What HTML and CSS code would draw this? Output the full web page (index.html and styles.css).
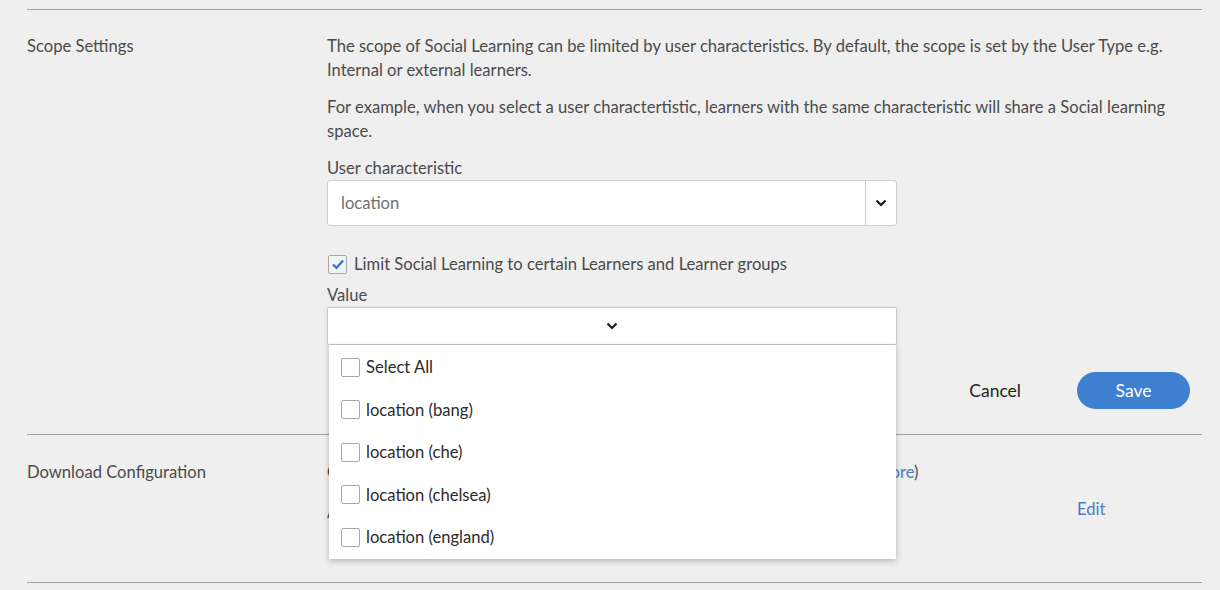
FILE: index.html
```html
<!DOCTYPE html>
<html>
<head>
<meta charset="utf-8">
<link rel="stylesheet" href="styles.css">
</head>
<body>
<div class="page">
  <section class="row first">
    <div class="label">Scope Settings</div>
    <div class="content">
      <p class="desc">The scope of Social Learning can be limited by user characteristics. By default, the scope is set by the User Type e.g. Internal or external learners.</p>
      <p class="desc">For example, when you select a user charactertistic, learners with the same characteristic will share a Social learning space.</p>
      <div class="field-label">User characteristic</div>
      <div class="select">
        <span class="select-value">location</span>
        <span class="select-btn">
          <svg width="12" height="8" viewBox="0 0 12 8"><path d="M1.5 1.5 L6 6 L10.5 1.5" fill="none" stroke="#1a1a1a" stroke-width="2.2"/></svg>
        </span>
      </div>
      <label class="check-row">
        <span class="box checked">
          <svg width="14" height="12" viewBox="0 0 14 12"><path d="M2 6.5 L5.5 10 L12 2.5" fill="none" stroke="#2f6fce" stroke-width="2.2"/></svg>
        </span>
        <span>Limit Social Learning to certain Learners and Learner groups</span>
      </label>
      <div class="field-label value-label">Value</div>
      <div class="multi">
        <div class="multi-head">
          <svg width="12" height="8" viewBox="0 0 12 8"><path d="M1.5 1.5 L6 6 L10.5 1.5" fill="none" stroke="#1a1a1a" stroke-width="2.2"/></svg>
        </div>
        <ul class="menu">
          <li><span class="box"></span>Select All</li>
          <li><span class="box"></span>location (bang)</li>
          <li><span class="box"></span>location (che)</li>
          <li><span class="box"></span>location (chelsea)</li>
          <li><span class="box"></span>location (england)</li>
        </ul>
      </div>
      <div class="actions">
        <button class="cancel">Cancel</button>
        <button class="save">Save</button>
      </div>
    </div>
  </section>
  <section class="row second">
    <div class="label">Download Configuration</div>
    <div class="content dl">
      <div class="dl-text">
        <div>Configure which content and files users can download for offline use (<a class="link">Learn more</a>)</div>
        <div>Allow learners to download content</div>
      </div>
      <a class="link edit">Edit</a>
    </div>
  </section>
</div>
</body>
</html>
```
FILE: styles.css
```css
* { box-sizing: border-box; }
html, body { margin: 0; padding: 0; }
body {
  background: #efefef;
  font-family: Lato, "Noto Sans", sans-serif;
  font-size: 16.6px;
  color: #4b4b4b;
  width: 1220px;
  height: 590px;
  overflow: hidden;
}
.page {
  padding: 9px 18px 0 27px;
}
.row {
  display: flex;
  border-top: 1px solid #a3a3a3;
}
.first { padding: 24px 0 25px; }
.second {
  padding: 25px 0 0;
  height: 149px;
  border-bottom: 1px solid #a3a3a3;
}
.label {
  width: 300px;
  flex: none;
  line-height: 24px;
}
.content {
  flex: 1;
  line-height: 24px;
}
.desc { margin: 0 0 13px; }
.field-label { margin-bottom: 0; }
.select {
  width: 570px;
  height: 46px;
  background: #fff;
  border: 1px solid #cfcfcf;
  border-radius: 3px;
  display: flex;
  align-items: center;
}
.select-value {
  flex: 1;
  padding-left: 13px;
  color: #707070;
}
.select-btn {
  width: 31px;
  height: 100%;
  border-left: 1px solid #cfcfcf;
  display: flex;
  align-items: center;
  justify-content: center;
}
.check-row {
  display: flex;
  align-items: center;
  margin-top: 26px;
  height: 24px;
}
.box {
  width: 19px;
  height: 19px;
  border: 1.5px solid #a8a8a8;
  border-radius: 2px;
  background: #fff;
  display: inline-flex;
  align-items: center;
  justify-content: center;
  flex: none;
}
.box.checked { background: #f3f3f3; margin: 0 7px 0 1px; }
.value-label { margin-top: 7px; }
.multi {
  position: relative;
  width: 570px;
}
.multi-head {
  height: 38px;
  background: #fff;
  border: 1px solid #c9c9c9;
  border-radius: 2px;
  display: flex;
  align-items: center;
  justify-content: center;
  box-shadow: 0 2px 4px rgba(0,0,0,0.12);
}
.menu {
  position: absolute;
  left: 2px;
  top: 38px;
  width: 567px;
  margin: 0;
  padding: 1px 0 0;
  list-style: none;
  background: #fff;
  box-shadow: 0 2px 6px rgba(0,0,0,0.25);
  z-index: 2;
  height: 214px;
  color: #2b2b2b;
}
.menu li {
  display: flex;
  align-items: center;
  height: 42.5px;
  padding-left: 12px;
}
.menu .box { margin-right: 6px; }
.actions {
  display: flex;
  justify-content: flex-end;
  align-items: center;
  gap: 56px;
  margin-top: 27px;
  padding-right: 12px;
}
button {
  font-family: inherit;
  border: none;
  cursor: pointer;
}
.cancel {
  background: none;
  font-size: 17.5px;
  color: #222;
  padding: 0;
}
.save {
  width: 113px;
  height: 37px;
  border-radius: 19px;
  background: #3f80d1;
  color: #fff;
  font-size: 17.5px;
}
.dl {
  display: flex;
  align-items: flex-start;
}
.dl-text {
  flex: 1;
  line-height: 40px;
  margin-top: -8px;
}
.link { color: #4a7cc2; }
.edit {
  width: 125px;
  margin-top: 37px;
}
```
